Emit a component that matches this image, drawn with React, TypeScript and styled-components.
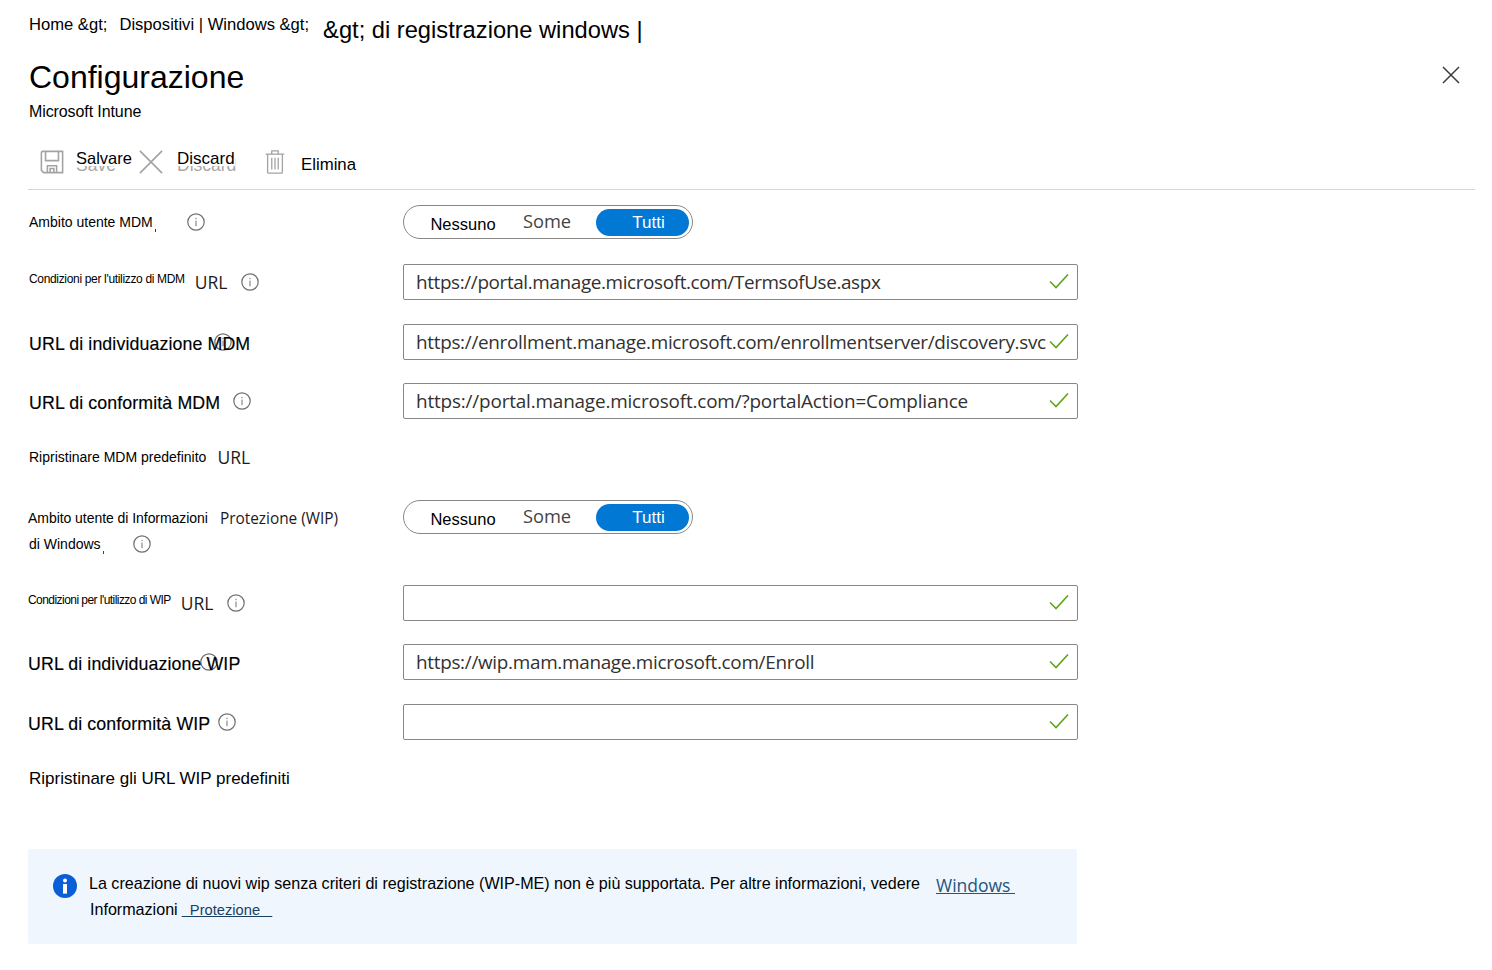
import styled, { createGlobalStyle } from "styled-components";

const GlobalStyle = createGlobalStyle`
  html, body {
    margin: 0;
    padding: 0;
    background: #fff;
  }
  body {
    font-family: "Liberation Sans", Arial, sans-serif;
    color: #000;
  }
`;

const InfoIcon = () => (
  <svg width="18" height="18" viewBox="0 0 18 18" fill="none">
    <circle cx="9" cy="9" r="8.2" stroke="#6e6e6e" strokeWidth="1.2" />
    <rect x="8.4" y="7.6" width="1.2" height="5.6" fill="#8a8a8a" />
    <rect x="8.4" y="4.8" width="1.2" height="1.4" fill="#8a8a8a" />
  </svg>
);

const CheckIcon = () => (
  <svg width="20" height="16" viewBox="0 0 20 16" fill="none">
    <path d="M1 7.5 L7 13.5 L19 0.5" stroke="#5ea614" strokeWidth="1.6" />
  </svg>
);

const SaveIcon = () => (
  <svg width="24" height="24" viewBox="0 0 26 26" fill="none" stroke="#a3a3a3" strokeWidth="1.7">
    <path d="M1.5 3 Q1.5 1.5 3 1.5 H24.5 V24.5 H4 L1.5 22 Z" />
    <path d="M6 1.5 V11.5 H20 V1.5" />
    <path d="M8 24.5 V17 H18 V24.5" />
    <path d="M11 24.5 V20 H15 V24.5" />
  </svg>
);

const DiscardIcon = () => (
  <svg width="24" height="24" viewBox="0 0 26 26" fill="none" stroke="#a3a3a3" strokeWidth="1.8">
    <path d="M1 1 L25 25 M25 1 L1 25" />
  </svg>
);

const TrashIcon = () => (
  <svg width="20" height="24" viewBox="0 0 20 26" fill="none" stroke="#a3a3a3" strokeWidth="1.4">
    <path d="M0 4.5 H20" />
    <path d="M6.5 4.5 V1 H13.5 V4.5" />
    <path d="M2 4.5 V24 Q2 25 3 25 H17 Q18 25 18 24 V4.5" />
    <path d="M6.5 8.5 V21 M10 8.5 V21 M13.5 8.5 V21" />
  </svg>
);

const CloseIcon = () => (
  <svg width="20" height="20" viewBox="0 0 20 20" fill="none" stroke="#3b3b3b" strokeWidth="1.5">
    <path d="M2 2 L18 18 M18 2 L2 18" />
  </svg>
);

const BannerIcon = () => (
  <svg width="24" height="24" viewBox="0 0 24 24">
    <circle cx="12" cy="12" r="12" fill="#0b5fd6" />
    <circle cx="12" cy="6.6" r="2" fill="#fff" />
    <rect x="10" y="10" width="4" height="9.6" fill="#fff" />
  </svg>
);

const Page = styled.div`
  width: 1492px;
  height: 970px;
  box-sizing: border-box;
  padding: 0 17px 0 28px;
  overflow: hidden;
`;

const Breadcrumb = styled.div`
  display: flex;
  align-items: flex-start;
  height: 57px;
  padding: 15px 0 0 1px;
  box-sizing: border-box;
`;

const Crumb = styled.span<{ $big?: boolean; $left?: number }>`
  font-size: ${(p) => (p.$big ? "23.7px" : "16.6px")};
  line-height: ${(p) => (p.$big ? "30px" : "20px")};
  margin-left: ${(p) => p.$left ?? 0}px;
  white-space: pre;
`;

const Header = styled.div`
  display: flex;
  justify-content: space-between;
  align-items: flex-start;
  padding-left: 1px;
`;

const Title = styled.h1`
  margin: 0;
  font-size: 32px;
  font-weight: 400;
  line-height: 40px;
`;

const Subtitle = styled.div`
  font-size: 16px;
  line-height: 20px;
  letter-spacing: -0.1px;
  margin-top: 5px;
`;

const CloseButton = styled.button`
  display: flex;
  border: 0;
  background: none;
  padding: 0;
  margin: 8px 14px 0 0;
`;

const Toolbar = styled.div`
  display: flex;
  align-items: center;
  height: 50px;
  margin-top: 17px;
  padding-left: 12px;
  border-bottom: 1px solid #d6d6d6;
`;

const ToolButton = styled.div<{ $gap: number; $width: number }>`
  display: flex;
  align-items: center;
  gap: ${(p) => p.$gap}px;
  width: ${(p) => p.$width}px;
  flex: none;

  svg {
    margin-bottom: 4px;
  }
`;

const ToolText = styled.span`
  position: relative;
  display: block;
`;

const GhostText = styled.span`
  position: absolute;
  left: 0;
  top: -1px;
  font-size: 17.5px;
  line-height: 20px;
  color: #a8a8a8;
  white-space: nowrap;
`;

const ToolFront = styled.span<{ $size?: number; $up?: boolean }>`
  position: relative;
  display: block;
  background: ${(p) => (p.$up ? "#fff" : "transparent")};
  font-size: ${(p) => p.$size ?? 16.5}px;
  height: ${(p) => (p.$up ? 16 : 17)}px;
  line-height: 17px;
  white-space: nowrap;
  top: ${(p) => (p.$up ? -6 : 0)}px;
`;

const Form = styled.div`
  display: flex;
  flex-direction: column;
`;

const Row = styled.div<{ $top: number; $height?: number; $align?: string }>`
  display: grid;
  grid-template-columns: 375px 675px;
  align-items: ${(p) => p.$align ?? "center"};
  height: ${(p) => p.$height ?? 36}px;
  margin-top: ${(p) => p.$top}px;
`;

const Label = styled.div<{ $left?: number }>`
  display: flex;
  align-items: center;
  padding-left: ${(p) => p.$left ?? 1}px;
  white-space: pre;
`;

const LabelStack = styled.div`
  display: flex;
  flex-direction: column;
  gap: 6px;
  padding-top: 8px;
`;

const Small = styled.span<{ $size?: number; $track?: number; $raise?: number }>`
  font-size: ${(p) => p.$size ?? 14}px;
  letter-spacing: ${(p) => p.$track ?? 0}px;
  line-height: 20px;
  position: relative;
  top: ${(p) => -(p.$raise ?? 0)}px;
`;

const Strong = styled.span<{ $size?: number; $left?: number; $drop?: number }>`
  position: relative;
  top: ${(p) => p.$drop ?? 0}px;
  font-family: "Open Sans", sans-serif;
  font-size: ${(p) => p.$size ?? 17.5}px;
  margin-left: ${(p) => p.$left ?? 0}px;
  line-height: 20px;
  color: #1c1c1c;
`;

const Wide = styled.span`
  position: relative;
  top: 2px;
  font-size: 17.8px;
  line-height: 22px;
  letter-spacing: 0.1px;
  -webkit-text-stroke: 0.15px #000;
`;

const Plain = styled.span`
  position: relative;
  top: 1px;
  font-size: 17px;
  line-height: 20px;
`;

const InfoWrap = styled.span<{ $left: number }>`
  display: flex;
  flex: none;
  margin-left: ${(p) => p.$left}px;
`;

const Speck = styled.i`
  display: inline-block;
  width: 1px;
  height: 3px;
  background: #1f3f9a;
  margin-left: 2px;
  align-self: flex-end;
`;

const Toggle = styled.div`
  display: flex;
  align-items: center;
  box-sizing: border-box;
  width: 290px;
  height: 34px;
  border: 1px solid #8a8886;
  border-radius: 17px;
`;

const ToggleOption = styled.span<{ $width: number; $big?: boolean }>`
  display: flex;
  align-items: center;
  justify-content: center;
  flex: none;
  box-sizing: border-box;
  width: ${(p) => p.$width}px;
  height: 26px;
  padding: ${(p) => (p.$big ? "0 0 3px" : "4px 0 0")};
  font-family: ${(p) => (p.$big ? '"Open Sans", sans-serif' : '"Liberation Sans", sans-serif')};
  font-size: ${(p) => (p.$big ? "18.3px" : "16.5px")};
  color: ${(p) => (p.$big ? "#444" : "#000")};
`;

const ToggleActive = styled.span`
  display: flex;
  align-items: center;
  justify-content: center;
  flex: none;
  box-sizing: border-box;
  width: 93px;
  height: 27px;
  margin-left: 24px;
  padding: 1px 0 0 12px;
  border-radius: 14px;
  font-size: 17px;
  color: #fff;
  background: #0078d4;
`;

const Field = styled.div`
  display: flex;
  align-items: center;
  justify-content: space-between;
  box-sizing: border-box;
  width: 675px;
  height: 36px;
  border: 1px solid #8a8886;
  border-radius: 2px;
  padding: 0 8px 0 12px;
`;

const FieldValue = styled.span<{ $track: number }>`
  font-family: "Open Sans", sans-serif;
  font-size: 18.9px;
  letter-spacing: ${(p) => p.$track}px;
  color: #323130;
  white-space: nowrap;
`;

const Banner = styled.div`
  display: flex;
  gap: 13px;
  box-sizing: border-box;
  width: 1049px;
  height: 95px;
  margin-top: 61px;
  padding: 25px 0 0 25px;
  background: #eff6fe;
  border-radius: 2px;
`;

const BannerText = styled.div`
  font-size: 16.1px;
  line-height: 26px;
  flex: 1;
  margin: -5px 0 0 -1px;
`;

const BannerLine = styled.div<{ $height: number; $indent?: number }>`
  display: flex;
  align-items: baseline;
  white-space: pre;
  height: ${(p) => p.$height}px;
  padding-left: ${(p) => p.$indent ?? 0}px;
`;

const BannerLink = styled.a<{ $big?: boolean; $left: number }>`
  position: relative;
  top: ${(p) => (p.$big ? 3 : 0)}px;
  font-family: ${(p) => (p.$big ? '"Open Sans", sans-serif' : '"Liberation Sans", sans-serif')};
  font-size: ${(p) => (p.$big ? "17.5px" : "14.7px")};
  margin-left: ${(p) => p.$left}px;
  color: ${(p) => (p.$big ? "#22557f" : "#1a3f63")};
  text-decoration: underline;
  text-decoration-skip-ink: none;
`;

const ScopeToggle = () => (
  <Toggle>
    <ToggleOption $width={118}>Nessuno</ToggleOption>
    <ToggleOption $width={50} $big>Some</ToggleOption>
    <ToggleActive>Tutti</ToggleActive>
  </Toggle>
);

const UrlField = ({ value, track = -0.3 }: { value?: string; track?: number }) => (
  <Field>
    <FieldValue $track={track}>{value}</FieldValue>
    <CheckIcon />
  </Field>
);

export default function App() {
  return (
    <Page>
      <GlobalStyle />
      <Breadcrumb>
        <Crumb>Home &amp;gt;</Crumb>
        <Crumb $left={12}>Dispositivi | Windows &amp;gt;</Crumb>
        <Crumb $big $left={14}>&amp;gt; di registrazione windows |</Crumb>
      </Breadcrumb>
      <Header>
        <div>
          <Title>Configurazione</Title>
          <Subtitle>Microsoft Intune</Subtitle>
        </div>
        <CloseButton>
          <CloseIcon />
        </CloseButton>
      </Header>
      <Toolbar>
        <ToolButton $gap={12} $width={99}>
          <SaveIcon />
          <ToolText>
            <GhostText>Save</GhostText>
            <ToolFront $up>Salvare</ToolFront>
          </ToolText>
        </ToolButton>
        <ToolButton $gap={14} $width={126}>
          <DiscardIcon />
          <ToolText>
            <GhostText>Discard</GhostText>
            <ToolFront $up $size={17}>Discard</ToolFront>
          </ToolText>
        </ToolButton>
        <ToolButton $gap={16} $width={120}>
          <TrashIcon />
          <ToolText>
            <ToolFront $size={16.8}>Elimina</ToolFront>
          </ToolText>
        </ToolButton>
      </Toolbar>
      <Form>
        <Row $top={15} $height={34}>
          <Label>
            <Small>Ambito utente MDM</Small>
            <Speck />
            <InfoWrap $left={31}><InfoIcon /></InfoWrap>
          </Label>
          <ScopeToggle />
        </Row>
        <Row $top={25}>
          <Label>
            <Small $size={12} $track={-0.33} $raise={3}>Condizioni per l'utilizzo di MDM</Small>
            <Strong $left={10}>URL</Strong>
            <InfoWrap $left={13}><InfoIcon /></InfoWrap>
          </Label>
          <UrlField value="https://portal.manage.microsoft.com/TermsofUse.aspx" track={-0.38} />
        </Row>
        <Row $top={24}>
          <Label>
            <Wide>URL di individuazione MDM</Wide>
            <InfoWrap $left={-36}><InfoIcon /></InfoWrap>
          </Label>
          <UrlField value="https://enrollment.manage.microsoft.com/enrollmentserver/discovery.svc" />
        </Row>
        <Row $top={23}>
          <Label>
            <Wide>URL di conformità MDM</Wide>
            <InfoWrap $left={13}><InfoIcon /></InfoWrap>
          </Label>
          <UrlField value="https://portal.manage.microsoft.com/?portalAction=Compliance" track={-0.17} />
        </Row>
        <Row $top={28} $height={20}>
          <Label>
            <Small>Ripristinare MDM predefinito</Small>
            <Strong $left={11}>URL</Strong>
          </Label>
        </Row>
        <Row $top={33} $height={34} $align="start">
          <LabelStack>
            <Label $left={0}>
              <Small $track={-0.05}>Ambito utente di Informazioni</Small>
              <Strong $left={12} $size={15.4} $drop={1}>Protezione (WIP)</Strong>
            </Label>
            <Label>
              <Small>di Windows</Small>
              <Speck />
              <InfoWrap $left={29}><InfoIcon /></InfoWrap>
            </Label>
          </LabelStack>
          <ScopeToggle />
        </Row>
        <Row $top={51}>
          <Label $left={0}>
            <Small $size={12} $track={-0.55} $raise={3}>Condizioni per l'utilizzo di WIP</Small>
            <Strong $left={10}>URL</Strong>
            <InfoWrap $left={14}><InfoIcon /></InfoWrap>
          </Label>
          <UrlField />
        </Row>
        <Row $top={23}>
          <Label $left={0}>
            <Wide>URL di individuazione WIP</Wide>
            <InfoWrap $left={-40}><InfoIcon /></InfoWrap>
          </Label>
          <UrlField value="https://wip.mam.manage.microsoft.com/Enroll" />
        </Row>
        <Row $top={24}>
          <Label $left={0}>
            <Wide>URL di conformità WIP</Wide>
            <InfoWrap $left={8}><InfoIcon /></InfoWrap>
          </Label>
          <UrlField />
        </Row>
        <Row $top={28} $height={20}>
          <Label>
            <Plain>Ripristinare gli URL WIP predefiniti</Plain>
          </Label>
        </Row>
      </Form>
      <Banner>
        <BannerIcon />
        <BannerText>
          <BannerLine $height={27}>
            La creazione di nuovi wip senza criteri di registrazione (WIP-ME) non è più supportata. Per altre informazioni, vedere
            <BannerLink $big $left={16}>Windows </BannerLink>
          </BannerLine>
          <BannerLine $height={26} $indent={1}>
            Informazioni
            <BannerLink $left={4}>  Protezione   </BannerLink>
          </BannerLine>
        </BannerText>
      </Banner>
    </Page>
  );
}
